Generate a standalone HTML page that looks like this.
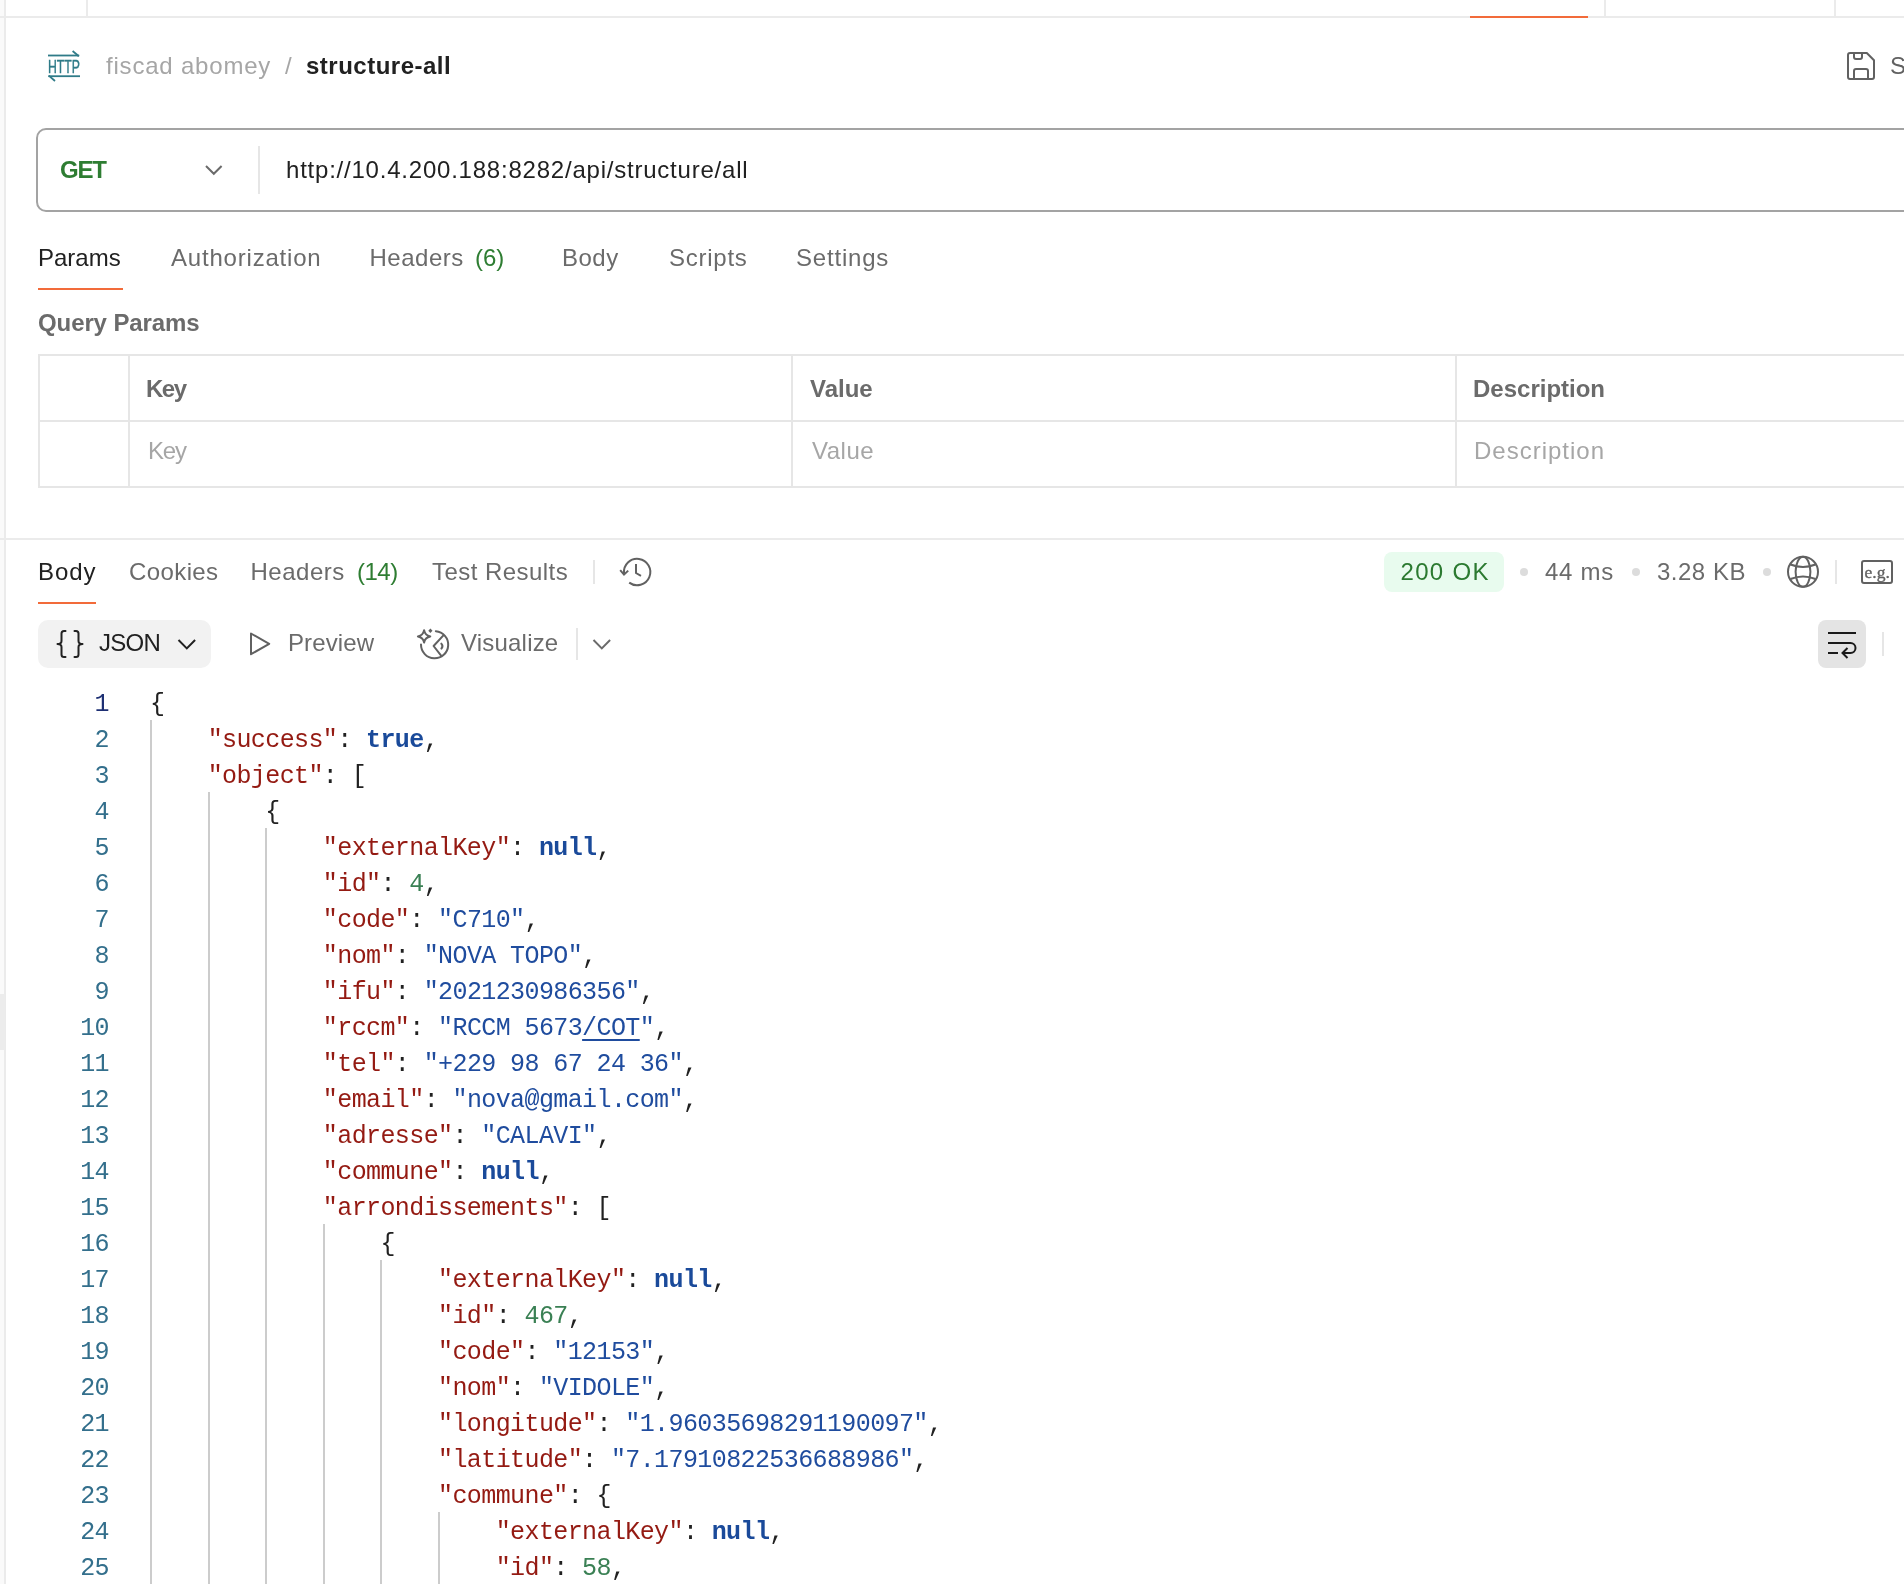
<!DOCTYPE html>
<html><head><meta charset="utf-8">
<style>
html,body{margin:0;padding:0;}
body{width:1904px;height:1584px;position:relative;overflow:hidden;background:#fff;will-change:transform;font-family:"Liberation Sans",sans-serif;}
.a{position:absolute;}
.t{position:absolute;white-space:pre;font-size:24px;line-height:24px;color:#6b6b6b;}
.hl{position:absolute;background:#ebebeb;}
.code{position:absolute;left:150px;top:686.5px;font-family:"Liberation Mono",monospace;font-size:25px;letter-spacing:-0.6px;line-height:36px;white-space:pre;color:#212121;}
.ln{position:absolute;left:40px;width:69px;top:686.5px;text-align:right;font-family:"Liberation Mono",monospace;font-size:25px;letter-spacing:-0.6px;line-height:36px;color:#336f8c;}
.g{position:absolute;width:2px;background:#cccccc;}
.k{color:#941a12;}
.s{color:#1f4c9e;}
.n{color:#3a8054;}
.b{color:#1a4a9a;font-weight:bold;}
</style></head><body>
<!-- left strip -->
<div class="a" style="left:0;top:0;width:4px;height:1584px;background:#fafafa;"></div>
<div class="a" style="left:4px;top:0;width:2px;height:1584px;background:#ebebeb;"></div>
<div class="a" style="left:0;top:994px;width:5px;height:56px;background:#ececec;"></div>
<!-- top tab strip -->
<div class="hl" style="left:0;top:16px;width:1904px;height:2px;"></div>
<div class="hl" style="left:86px;top:0;width:2px;height:16px;"></div>
<div class="hl" style="left:1604px;top:0;width:2px;height:16px;"></div>
<div class="hl" style="left:1834px;top:0;width:2px;height:16px;"></div>
<div class="a" style="left:1470px;top:16px;width:118px;height:2px;background:#f26b3a;"></div>

<!-- header -->
<svg class="a" style="left:44px;top:48px;" width="40" height="38" viewBox="44 48 40 38">
  <g stroke="#2f7b88" stroke-width="1.8" fill="none" stroke-linecap="butt">
    <path d="M48 55.5 H79.2"/>
    <path d="M72.6 51 L78.8 56.2"/>
    <path d="M48.3 76.2 H80"/>
    <path d="M48.8 75.6 L55 81"/>
  </g>
  <text x="48" y="72.6" font-family="Liberation Sans" font-size="17.9" stroke="#2f7b88" stroke-width="0.4" fill="#2f7b88" textLength="32" lengthAdjust="spacingAndGlyphs">HTTP</text>
</svg>
<div class="t" style="left:106px;top:54px;color:#a6a6a6;font-size:24px;letter-spacing:0.8px;">fiscad abomey</div>
<div class="t" style="left:285px;top:54px;color:#a6a6a6;">/</div>
<div class="t" style="left:306px;top:54px;color:#212121;font-weight:bold;letter-spacing:0.5px;">structure-all</div>
<svg class="a" style="left:1840px;top:44px;" width="44" height="44" viewBox="1840 44 44 44">
  <g stroke="#616161" stroke-width="2" fill="none" stroke-linejoin="round">
    <path d="M1850 53 H1866.8 L1874 60.2 V77 Q1874 79 1872 79 H1850 Q1848 79 1848 77 V55 Q1848 53 1850 53 Z"/>
    <path d="M1854 53 V57 Q1854 59 1856 59 H1860 Q1862 59 1862 57 V53"/>
    <path d="M1854 79 V71 Q1854 69 1856 69 H1866 Q1868 69 1868 71 V79"/>
  </g>
</svg>
<div class="t" style="left:1890px;top:54px;color:#616161;">S</div>

<!-- url bar -->
<div class="a" style="left:36px;top:128px;width:1900px;height:80px;border:2px solid #a3a3a3;border-radius:10px;box-sizing:content-box;"></div>
<div class="t" style="left:60px;top:158px;color:#2e7d32;font-weight:bold;letter-spacing:-1.2px;">GET</div>
<svg class="a" style="left:200px;top:160px;" width="28" height="20" viewBox="200 160 28 20">
  <path d="M206 166 L213.8 173.8 L221.6 166" stroke="#6b6b6b" stroke-width="2" fill="none"/>
</svg>
<div class="a" style="left:258px;top:146px;width:2px;height:48px;background:#e6e6e6;"></div>
<div class="t" style="left:286px;top:158px;color:#212121;letter-spacing:0.78px;">http://10.4.200.188:8282/api/structure/all</div>

<!-- request tabs -->
<div class="t" style="left:38px;top:246px;color:#212121;">Params</div>
<div class="a" style="left:38px;top:288px;width:85px;height:2px;background:#f26b3a;"></div>
<div class="t" style="left:171px;top:246px;letter-spacing:0.8px;">Authorization</div>
<div class="t" style="left:369.5px;top:246px;letter-spacing:0.5px;">Headers</div>
<div class="t" style="left:475px;top:246px;color:#2e7d32;">(6)</div>
<div class="t" style="left:562px;top:246px;letter-spacing:0.5px;">Body</div>
<div class="t" style="left:669px;top:246px;letter-spacing:0.75px;">Scripts</div>
<div class="t" style="left:796px;top:246px;letter-spacing:0.8px;">Settings</div>

<div class="t" style="left:38px;top:310.8px;font-weight:bold;letter-spacing:-0.1px;">Query Params</div>

<!-- params table -->
<div class="a" style="left:38px;top:354px;width:1900px;height:2px;background:#e6e6e6;"></div>
<div class="a" style="left:38px;top:420px;width:1900px;height:2px;background:#e6e6e6;"></div>
<div class="a" style="left:38px;top:486px;width:1900px;height:2px;background:#e6e6e6;"></div>
<div class="a" style="left:38px;top:354px;width:2px;height:134px;background:#e6e6e6;"></div>
<div class="a" style="left:128px;top:354px;width:2px;height:134px;background:#e6e6e6;"></div>
<div class="a" style="left:791px;top:354px;width:2px;height:134px;background:#e6e6e6;"></div>
<div class="a" style="left:1455px;top:354px;width:2px;height:134px;background:#e6e6e6;"></div>
<div class="t" style="left:146px;top:377px;font-weight:bold;letter-spacing:-1.5px;">Key</div>
<div class="t" style="left:810px;top:377px;font-weight:bold;">Value</div>
<div class="t" style="left:1473px;top:377px;font-weight:bold;">Description</div>
<div class="t" style="left:148px;top:439px;color:#a6a6a6;letter-spacing:-1.2px;">Key</div>
<div class="t" style="left:812px;top:439px;color:#a6a6a6;letter-spacing:0.5px;">Value</div>
<div class="t" style="left:1474px;top:439px;color:#a6a6a6;letter-spacing:1px;">Description</div>

<!-- response separator -->
<div class="hl" style="left:0;top:538px;width:1904px;height:2px;"></div>

<!-- response tabs -->
<div class="t" style="left:38px;top:560px;color:#212121;letter-spacing:0.9px;">Body</div>
<div class="a" style="left:38px;top:602px;width:58px;height:2px;background:#f26b3a;"></div>
<div class="t" style="left:129px;top:560px;letter-spacing:0.4px;">Cookies</div>
<div class="t" style="left:250.5px;top:560px;letter-spacing:0.5px;">Headers</div>
<div class="t" style="left:357px;top:560px;color:#2e7d32;letter-spacing:-0.5px;">(14)</div>
<div class="t" style="left:432px;top:560px;letter-spacing:0.45px;">Test Results</div>
<div class="a" style="left:593px;top:560px;width:2px;height:24px;background:#e6e6e6;"></div>
<svg class="a" style="left:612px;top:550px;" width="48" height="44" viewBox="612 550 48 44">
  <g stroke="#616161" stroke-width="2" fill="none" stroke-linecap="butt" stroke-linejoin="miter">
    <path d="M624 573.5 A13.2 13.2 0 1 1 629.2 582.6"/>
    <path d="M620.2 570.2 L624 574.6 L628.2 570.6"/>
    <path d="M636 564 V573 L641 575.8"/>
  </g>
</svg>

<!-- status -->
<div class="a" style="left:1384px;top:552px;width:120px;height:40px;background:#e8fbee;border-radius:8px;"></div>
<div class="t" style="left:1400.5px;top:560px;color:#2b7a30;letter-spacing:1.3px;">200 OK</div>
<div class="a" style="left:1520px;top:568px;width:8px;height:8px;border-radius:4px;background:#dcdcdc;"></div>
<div class="t" style="left:1545px;top:560px;letter-spacing:0.75px;">44 ms</div>
<div class="a" style="left:1632px;top:568px;width:8px;height:8px;border-radius:4px;background:#dcdcdc;"></div>
<div class="t" style="left:1657px;top:560px;letter-spacing:0.5px;">3.28 KB</div>
<div class="a" style="left:1763px;top:568px;width:8px;height:8px;border-radius:4px;background:#dcdcdc;"></div>
<svg class="a" style="left:1784px;top:553px;" width="38" height="38" viewBox="1784 553 38 38">
  <g stroke="#616161" stroke-width="2" fill="none">
    <circle cx="1803" cy="571.8" r="15"/>
    <ellipse cx="1803" cy="571.8" rx="7.4" ry="15"/>
    <path d="M1790.5 564.5 Q1803 569.5 1815.5 564.5"/>
    <path d="M1790.5 579 Q1803 574 1815.5 579"/>
  </g>
</svg>
<div class="a" style="left:1835px;top:560px;width:2px;height:24px;background:#e6e6e6;"></div>
<div class="a" style="left:1861px;top:560px;width:28px;height:20px;border:2px solid #616161;border-radius:3px;"></div>
<div class="a" style="left:1864.5px;top:559.5px;font-family:'Liberation Serif',serif;font-size:17.5px;line-height:24px;color:#616161;letter-spacing:0px;-webkit-text-stroke:0.35px #616161;">e.g.</div>

<!-- body toolbar -->
<div class="a" style="left:38px;top:620px;width:173px;height:48px;background:#f2f2f2;border-radius:10px;"></div>
<svg class="a" style="left:52px;top:626px;" width="36" height="36" viewBox="52 626 36 36">
  <g stroke="#212121" stroke-width="2" fill="none" stroke-linejoin="round" stroke-linecap="round">
    <path d="M65.5 631 H64 Q61.5 631 61.5 633.5 V641 Q61.5 644 57.5 644 Q61.5 644 61.5 647 V654.5 Q61.5 657 64 657 H65.5"/>
    <path d="M74.5 631 H76 Q78.5 631 78.5 633.5 V641 Q78.5 644 82.5 644 Q78.5 644 78.5 647 V654.5 Q78.5 657 76 657 H74.5"/>
  </g>
</svg>
<div class="t" style="left:99px;top:631px;color:#212121;letter-spacing:-0.7px;">JSON</div>
<svg class="a" style="left:174px;top:634px;" width="26" height="20" viewBox="174 634 26 20">
  <path d="M178.5 640 L186.8 648.4 L195.1 640" stroke="#212121" stroke-width="2" fill="none"/>
</svg>
<svg class="a" style="left:244px;top:628px;" width="32" height="32" viewBox="244 628 32 32">
  <path d="M251 633.5 L269.2 643.8 L251 654.2 Z" stroke="#616161" stroke-width="2" fill="none" stroke-linejoin="round"/>
</svg>
<div class="t" style="left:288px;top:631px;letter-spacing:0.1px;">Preview</div>
<svg class="a" style="left:414px;top:625px;" width="38" height="38" viewBox="414 625 38 38">
  <g stroke="#616161" stroke-width="2" fill="none" stroke-linejoin="round" stroke-linecap="round">
    <path d="M435.8 631.2 A13.6 13.6 0 1 1 421 644.6"/>
    <path d="M443.4 635.4 L433.6 646 L441.3 655.8"/>
    <path d="M441.3 643.6 Q443.6 646 441.4 648.6"/>
    <path d="M424.1 630.2 Q425 635.5 430.3 636.4 Q425 637.3 424.1 642.6 Q423.2 637.3 417.9 636.4 Q423.2 635.5 424.1 630.2 Z"/>
  </g>
  <path d="M430.4 628.6 L432.5 630.8 L430.4 633 L428.3 630.8 Z" fill="#616161"/>
</svg>
<div class="t" style="left:461px;top:631px;letter-spacing:0.2px;">Visualize</div>
<div class="a" style="left:576px;top:628px;width:2px;height:32px;background:#e6e6e6;"></div>
<svg class="a" style="left:588px;top:634px;" width="28" height="20" viewBox="588 634 28 20">
  <path d="M593.5 640 L601.8 648.4 L610.1 640" stroke="#6b6b6b" stroke-width="2" fill="none"/>
</svg>

<div class="a" style="left:1818px;top:620px;width:48px;height:48px;background:#e4e4e4;border-radius:8px;"></div>
<svg class="a" style="left:1818px;top:620px;" width="48" height="48" viewBox="1818 620 48 48">
  <g stroke="#1a1a1a" stroke-width="2" fill="none">
    <path d="M1828 633 H1856"/>
    <path d="M1828 643 H1850.5 A5 5 0 0 1 1850.5 653 H1842.5"/>
    <path d="M1828 653 H1838"/>
    <path d="M1847.5 648 L1842.5 653 L1847.5 658"/>
  </g>
</svg>
<div class="a" style="left:1882px;top:632px;width:2px;height:24px;background:#e6e6e6;"></div>

<!-- code -->
<div class="g" style="left:150.0px;top:720px;height:864px;"></div>
<div class="g" style="left:207.6px;top:792px;height:792px;"></div>
<div class="g" style="left:265.2px;top:828px;height:756px;"></div>
<div class="g" style="left:322.8px;top:1224px;height:360px;"></div>
<div class="g" style="left:380.4px;top:1260px;height:324px;"></div>
<div class="g" style="left:438.0px;top:1512px;height:72px;"></div>
<div class="ln"><span style="color:#1d2f73">1</span><br><span>2</span><br><span>3</span><br><span>4</span><br><span>5</span><br><span>6</span><br><span>7</span><br><span>8</span><br><span>9</span><br><span>10</span><br><span>11</span><br><span>12</span><br><span>13</span><br><span>14</span><br><span>15</span><br><span>16</span><br><span>17</span><br><span>18</span><br><span>19</span><br><span>20</span><br><span>21</span><br><span>22</span><br><span>23</span><br><span>24</span><br><span>25</span></div>
<div class="code">{
    <span class="k">"success"</span>: <span class="b">true</span>,
    <span class="k">"object"</span>: [
        {
            <span class="k">"externalKey"</span>: <span class="b">null</span>,
            <span class="k">"id"</span>: <span class="n">4</span>,
            <span class="k">"code"</span>: <span class="s">"C710"</span>,
            <span class="k">"nom"</span>: <span class="s">"NOVA TOPO"</span>,
            <span class="k">"ifu"</span>: <span class="s">"2021230986356"</span>,
            <span class="k">"rccm"</span>: <span class="s">"RCCM 5673</span><span class="s" style="text-decoration:underline;text-underline-offset:4px;">/COT</span><span class="s">"</span>,
            <span class="k">"tel"</span>: <span class="s">"+229 98 67 24 36"</span>,
            <span class="k">"email"</span>: <span class="s">"nova@gmail.com"</span>,
            <span class="k">"adresse"</span>: <span class="s">"CALAVI"</span>,
            <span class="k">"commune"</span>: <span class="b">null</span>,
            <span class="k">"arrondissements"</span>: [
                {
                    <span class="k">"externalKey"</span>: <span class="b">null</span>,
                    <span class="k">"id"</span>: <span class="n">467</span>,
                    <span class="k">"code"</span>: <span class="s">"12153"</span>,
                    <span class="k">"nom"</span>: <span class="s">"VIDOLE"</span>,
                    <span class="k">"longitude"</span>: <span class="s">"1.96035698291190097"</span>,
                    <span class="k">"latitude"</span>: <span class="s">"7.17910822536688986"</span>,
                    <span class="k">"commune"</span>: {
                        <span class="k">"externalKey"</span>: <span class="b">null</span>,
                        <span class="k">"id"</span>: <span class="n">58</span>,</div>

</body></html>
